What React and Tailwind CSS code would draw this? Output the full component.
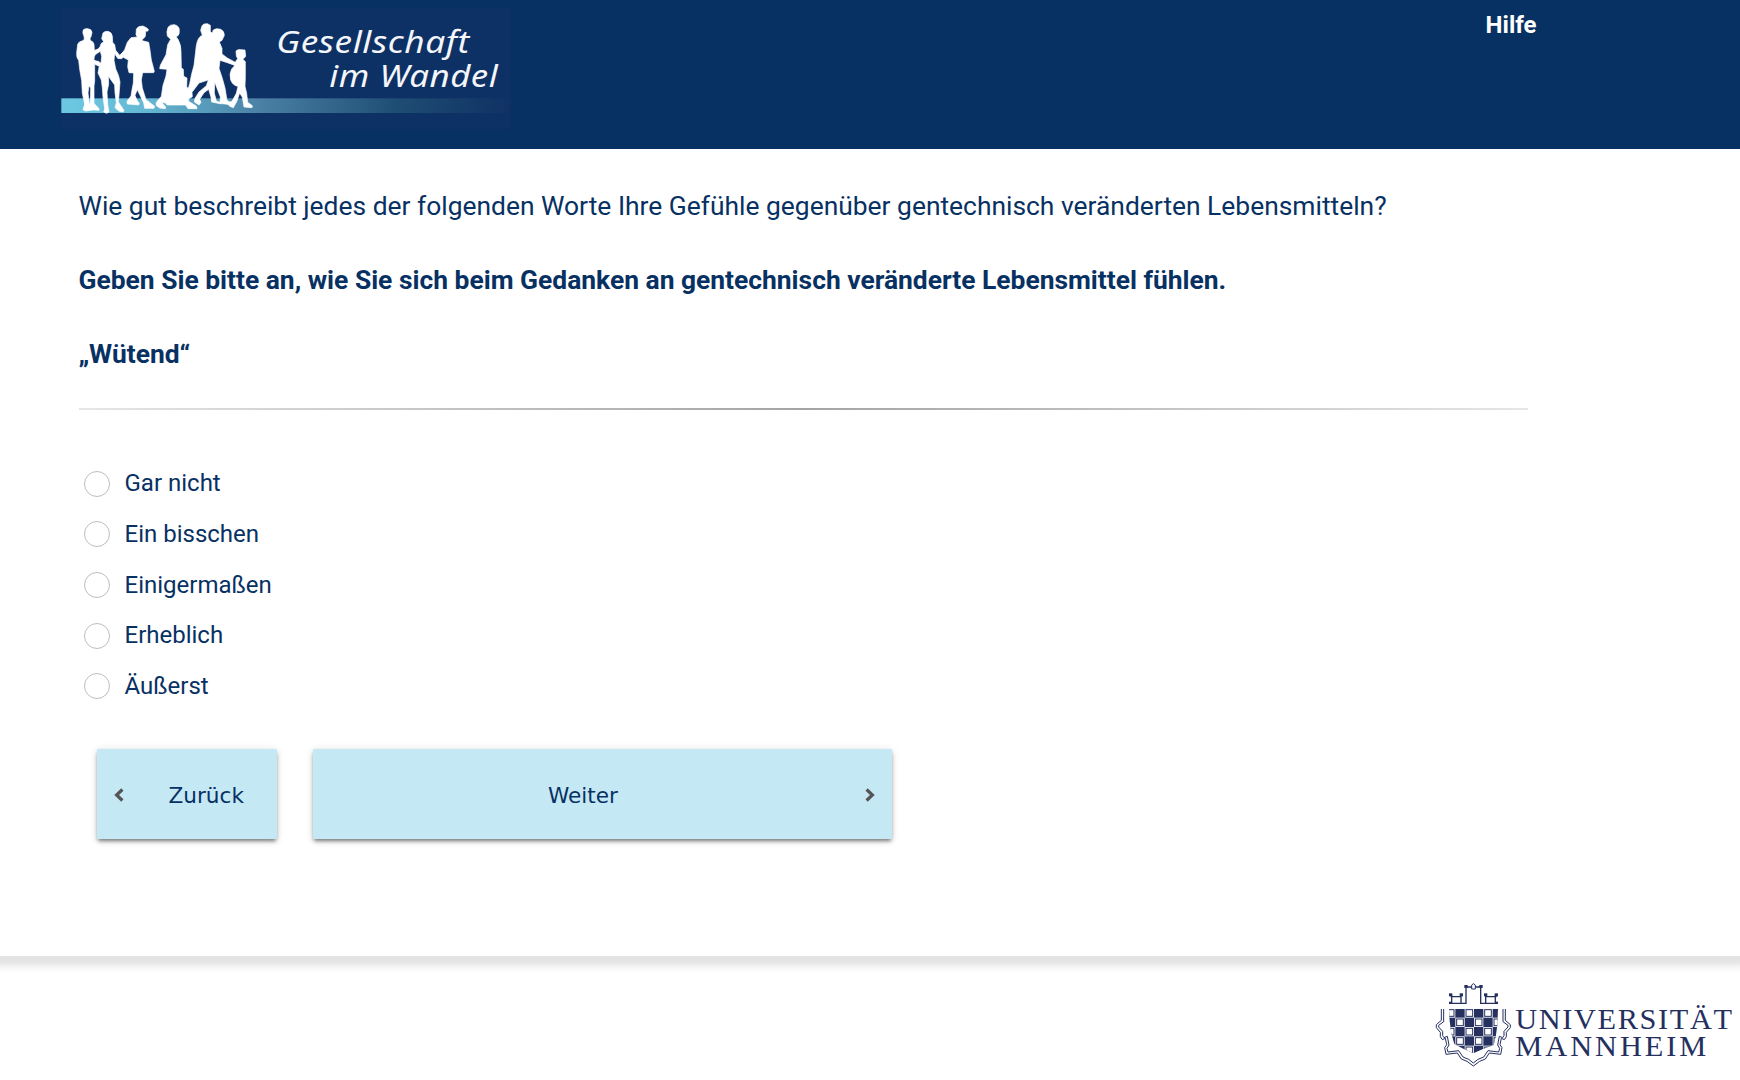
const OPTIONS = ['Gar nicht', 'Ein bisschen', 'Einigermaßen', 'Erheblich', 'Äußerst']

function StudyLogo() {
  return (
    <svg className="block h-[121px] w-[450px]" viewBox="33 24 1350 363" role="img" aria-label="Gesellschaft im Wandel">
      <defs>
        <linearGradient id="stripe" x1="0" x2="1" y1="0" y2="0">
          <stop offset="0" stopColor="#6cc8e2" />
          <stop offset="0.18" stopColor="#65b9d4" />
          <stop offset="0.45" stopColor="#4a7fa4" />
          <stop offset="0.75" stopColor="#1e4d73" />
          <stop offset="1" stopColor="#103164" />
        </linearGradient>
      </defs>
      <rect x="33" y="24" width="1350" height="363" fill="#0e3165" />
      <rect x="34" y="295" width="1346" height="44" fill="url(#stripe)" />
      <g fill="#fff" stroke="#fff" strokeWidth="2" strokeLinejoin="round">
        <path d="M99 91Q103 85 113 86Q125 87 126 97Q125 108 120 116L121 121Q131 125 132 133L133 151L144 148L145 154L133 164L132 181L149 192L147 198L134 193L134 244L132 258L132 310L147 326L147 331L129 330L107 333L99 329L104 312L97 280L95 242L89 208L86 181Q79 174 80 158L83 133Q85 125 98 122L103 118L102 109Q97 101 99 91ZM117 257L114 279L118 312L121 310L122 264Z" fillRule="evenodd" />
        <path d="M159 99Q164 93 174 94Q186 97 187 109L188 127L194 134L197 151L209 166L219 157L225 158L222 168L208 176L203 175L194 161L192 181L197 206Q208 228 210 246L207 285L205 306L222 331L219 336L206 333L195 323L199 308L195 278L194 255L175 229L176 252L171 276L173 315L177 336L170 340L161 336L164 326L159 292L157 264L154 240L144 219L148 197L131 189L128 181L145 184L153 190L155 169L151 154L137 163L133 169L128 161L150 141L153 131L161 125L155 116Z" />
        <path d="M259 87Q265 77 279 78L289 83L295 88L294 93L287 94L286 109Q281 117 277 118L277 122L296 127L300 150L304 180L313 214L311 218L278 218L274 240L277 264L288 299L314 319L312 325L284 325L281 308L262 269L255 286L262 303L268 309L266 315L232 312L231 304L243 288L246 269L250 249L251 219L237 218L233 200L235 180L220 172L213 177L207 172L224 149L232 127L243 113L262 111L258 104Z" />
        <path d="M354 82Q360 73 373 74Q388 77 388 91Q389 103 383 108L378 110L384 118Q394 136 393 155L394 203L400 208L401 229L411 234L410 260L415 266L416 304L439 318L441 326L414 326L407 315L351 315L347 309L335 307L347 321L346 326L329 324L318 316L319 307L334 289L339 256L348 228L351 208L329 206L331 196L348 164L353 134L362 118L352 108Q349 95 354 82Z" />
        <path d="M456 77Q460 70 472 71L481 76L481 95L487 99L490 90Q499 83 512 88Q523 93 523 106L516 121L508 126L516 145L516 162L532 174L558 188L557 197L532 188L510 181L507 205L517 235L525 264L531 301L545 309L542 314L517 311L510 305L511 291L494 246L493 279L499 303L515 308L514 312L485 306L483 292L476 268L462 278L449 298L453 307L447 315L433 306L435 295L447 276L469 257L475 240L447 249L426 277L427 290L417 296L408 288L419 251L425 222L432 196L437 154Q439 121 450 110L457 106L452 91Z" />
        <path d="M558 153Q563 147 573 149L585 150L587 169L579 178L586 185L586 233L585 259L590 280L593 307L607 317L606 323L582 321L577 292L569 279L560 305L550 323L539 319L532 310L546 304L559 280L564 259Q549 257 542 240Q537 221 545 207L553 198L558 183L563 176L559 168Z" />
      </g>
      <g className="font-['Noto_Sans']" fill="#f4f6fa" fontStyle="italic" fontSize="94">
        <text x="679" y="160" textLength="580" lengthAdjust="spacingAndGlyphs" letterSpacing="1.5">Gesellschaft</text>
        <text x="838" y="262" textLength="507" lengthAdjust="spacingAndGlyphs" letterSpacing="1.5">im Wandel</text>
      </g>
    </svg>
  )
}

const SHIELD_ROWS = [0, 1, 2, 3, 4]
const SHIELD_COLUMNS = [0, 1, 2, 3, 4, 5]

function UniversityLogo() {
  const outer = 'M64 117V151L49 164V173L61 187V200L67 209L76 205L80 224L74 233L78 253L112 249L124 267L141 274L160 288'
  const inner = 'M71 117V155L56 166V171L68 184V197L72 203L82 199L87 225L81 235L84 246L116 242L129 261L146 268L160 279'
  return (
    <svg className="block h-[110px] w-[320px]" viewBox="0 0 960 330" role="img" aria-label="Universität Mannheim">
      <defs>
        <clipPath id="shield">
          <path d="M87 116H234L232 165Q229 198 221 225L194 235L160 250L127 235L103 222Q91 188 89 153Z" />
        </clipPath>
      </defs>
      <g fill="none" stroke="#25305f" strokeWidth="3">
        <path d={outer} />
        <path d={inner} />
        <g transform="matrix(-1 0 0 1 320 0)">
          <path d={outer} />
          <path d={inner} />
        </g>
        <path d="M88 100H138V53M182 53V100H233M95 76V99M123 76V99M197 76V99M226 76V99M92 80H125M195 80H230M138 51H182" strokeWidth="4" />
        <path d="M155 57V45Q160 37 166 45V57Z" fill="#fff" />
      </g>
      <g fill="#25305f">
        <rect x="133" y="45" width="10" height="9" />
        <rect x="178" y="45" width="10" height="9" />
        <rect x="87" y="70" width="10" height="9" />
        <rect x="119" y="70" width="10" height="9" />
        <rect x="192" y="70" width="10" height="9" />
        <rect x="224" y="70" width="10" height="9" />
        <rect x="87" y="95" width="8" height="7" />
        <rect x="226" y="95" width="8" height="7" />
      </g>
      <g clipPath="url(#shield)">
        <rect x="80" y="116" width="160" height="140" fill="#25305f" />
        {SHIELD_ROWS.map((r) =>
          SHIELD_COLUMNS.map((c) =>
            (r + c) % 2 === 0 ? (
              <g key={`${r}-${c}`}>
                <rect x={78 + c * 28} y={115 + r * 28} width="28" height="28" fill="#fff" />
                <rect x={82 + c * 28} y={119 + r * 28} width="20" height="20" fill="none" stroke="#25305f" strokeWidth="3" />
              </g>
            ) : null,
          ),
        )}
      </g>
      <g className="font-['Liberation_Serif']" fill="#25305f" fontSize="91">
        <text x="286" y="178" textLength="650">UNIVERSITÄT</text>
        <text x="286" y="258" textLength="573">MANNHEIM</text>
      </g>
    </svg>
  )
}

function Chevron({ flip }) {
  return (
    <svg className={flip ? 'mt-[2px] h-[14px] w-[10px] rotate-180' : 'mt-[2px] h-[14px] w-[10px]'} viewBox="0 0 10 14" fill="none" stroke="#555" strokeWidth="3.2">
      <path d="M8.4 1.5L2.6 7L8.4 12.5" />
    </svg>
  )
}

const BUTTON =
  "flex h-[90px] items-center rounded-[1px] bg-[#c5e9f4] font-['DejaVu_Sans',sans-serif] text-[21.6px] text-[#083163] shadow-[0_3px_4px_-1px_rgba(0,0,0,0.5),0_1px_8px_rgba(0,0,0,0.12)]"

export default function App() {
  return (
    <div className="flex h-[1080px] w-[1740px] flex-col overflow-hidden bg-white font-['Roboto',sans-serif] text-[#083163]">
      <header className="flex h-[149px] shrink-0 items-start justify-between bg-[#083163] pt-2 pl-[61px] pr-[203.5px]">
        <StudyLogo />
        <a className="text-2xl leading-[34px] font-bold text-white">Hilfe</a>
      </header>

      <main className="flex h-[807px] shrink-0 flex-col pl-[78.5px]">
        <div className="flex flex-col gap-[37px] pt-[39px] text-[26.4px] leading-[37px]">
          <p>Wie gut beschreibt jedes der folgenden Worte Ihre Gefühle gegenüber gentechnisch veränderten Lebensmitteln?</p>
          <p className="font-bold">Geben Sie bitte an, wie Sie sich beim Gedanken an gentechnisch veränderte Lebensmittel fühlen.</p>
          <p className="font-bold">„Wütend“</p>
        </div>
        <div className="mt-[35px] h-[2px] w-[1449px] bg-linear-to-r from-[#e6e6e6] via-[#a4a4a4] to-[#e6e6e6]" />

        <div className="mt-[48px] flex flex-col pl-[5.5px]">
          {OPTIONS.map((label) => (
            <label key={label} className="flex h-[50.67px] items-center gap-[14.5px] text-2xl">
              <span className="mt-[0.6px] size-[26px] rounded-full border border-[#bdbdbd]" />
              <span>{label}</span>
            </label>
          ))}
        </div>

        <div className="mt-[38px] flex gap-9 pl-[18.5px]">
          <button className={`${BUTTON} w-[180px] pl-[17px]`}>
            <Chevron />
            <span className="ml-[44.5px] pt-[4px]">Zurück</span>
          </button>
          <button className={`${BUTTON} w-[579px] pr-[17px]`}>
            <span className="flex-1 pt-[4px] pr-[12px] text-center">Weiter</span>
            <Chevron flip />
          </button>
        </div>
      </main>

      <footer className="flex flex-1 items-start justify-end bg-[linear-gradient(to_bottom,#e2e2e2_0px,#e5e5e5_6px,#f5f5f5_11px,#fff_17px)] pt-[14px]">
        <UniversityLogo />
      </footer>
    </div>
  )
}
